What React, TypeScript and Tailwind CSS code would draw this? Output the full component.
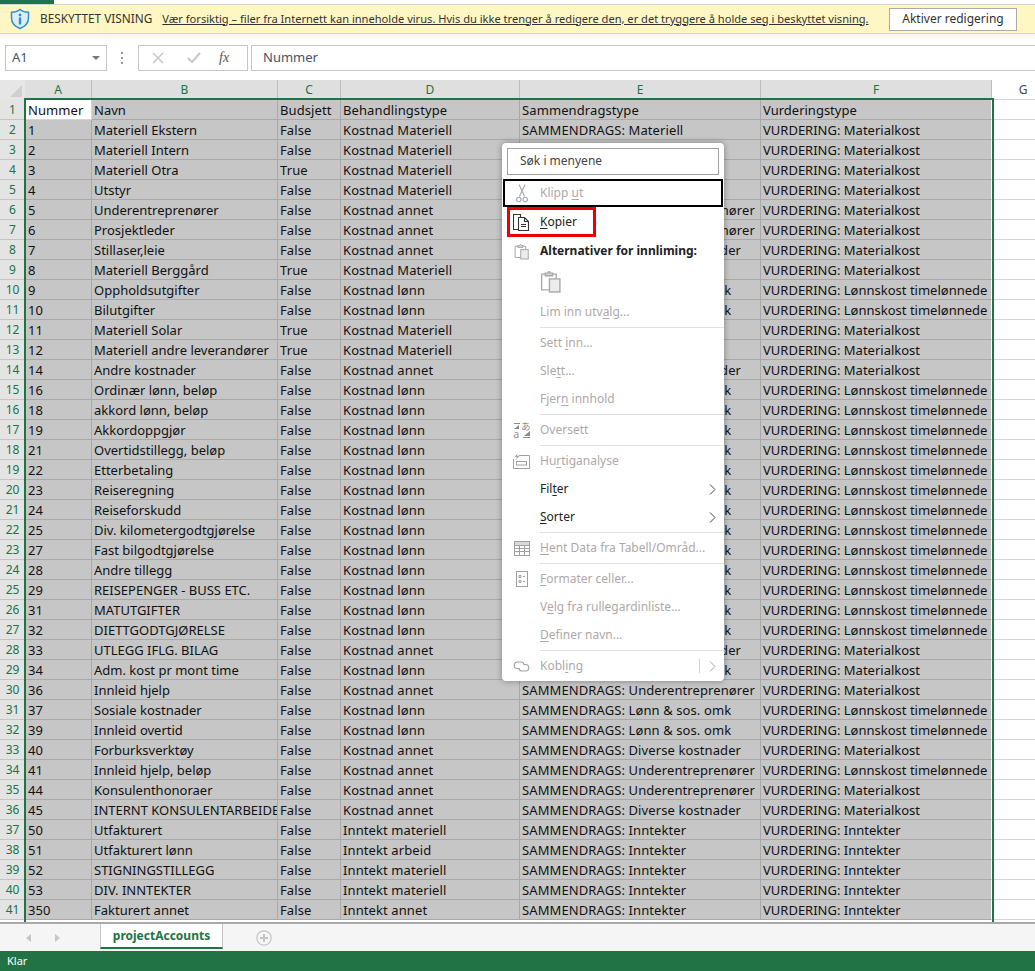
const MAT = "Kostnad Materiell";
const LON = "Kostnad lønn";
const ANN = "Kostnad annet";
const S_MAT = "SAMMENDRAGS: Materiell";
const S_UE = "SAMMENDRAGS: Underentreprenører";
const S_DIV = "SAMMENDRAGS: Diverse kostnader";
const S_LON = "SAMMENDRAGS: Lønn & sos. omk";
const S_INN = "SAMMENDRAGS: Inntekter";
const V_MAT = "VURDERING: Materialkost";
const V_LON = "VURDERING: Lønnskost timelønnede";
const V_INN = "VURDERING: Inntekter";

const rows: string[][] = [
  ["Nummer", "Navn", "Budsjett", "Behandlingstype", "Sammendragstype", "Vurderingstype"],
  ["1", "Materiell Ekstern", "False", MAT, S_MAT, V_MAT],
  ["2", "Materiell Intern", "False", MAT, S_MAT, V_MAT],
  ["3", "Materiell Otra", "True", MAT, S_MAT, V_MAT],
  ["4", "Utstyr", "False", MAT, S_MAT, V_MAT],
  ["5", "Underentreprenører", "False", ANN, S_UE, V_MAT],
  ["6", "Prosjektleder", "False", ANN, S_UE, V_MAT],
  ["7", "Stillaser,leie", "False", ANN, S_DIV, V_MAT],
  ["8", "Materiell Berggård", "True", MAT, S_MAT, V_MAT],
  ["9", "Oppholdsutgifter", "False", LON, S_LON, V_LON],
  ["10", "Bilutgifter", "False", LON, S_LON, V_LON],
  ["11", "Materiell Solar", "True", MAT, S_MAT, V_MAT],
  ["12", "Materiell andre leverandører", "True", MAT, S_MAT, V_MAT],
  ["14", "Andre kostnader", "False", ANN, S_DIV, V_MAT],
  ["16", "Ordinær lønn, beløp", "False", LON, S_LON, V_LON],
  ["18", "akkord lønn, beløp", "False", LON, S_LON, V_LON],
  ["19", "Akkordoppgjør", "False", LON, S_LON, V_LON],
  ["21", "Overtidstillegg, beløp", "False", LON, S_LON, V_LON],
  ["22", "Etterbetaling", "False", LON, S_LON, V_LON],
  ["23", "Reiseregning", "False", LON, S_LON, V_LON],
  ["24", "Reiseforskudd", "False", LON, S_LON, V_LON],
  ["25", "Div. kilometergodtgjørelse", "False", LON, S_LON, V_LON],
  ["27", "Fast bilgodtgjørelse", "False", LON, S_LON, V_LON],
  ["28", "Andre tillegg", "False", LON, S_LON, V_LON],
  ["29", "REISEPENGER - BUSS ETC.", "False", LON, S_LON, V_LON],
  ["31", "MATUTGIFTER", "False", LON, S_LON, V_LON],
  ["32", "DIETTGODTGJØRELSE", "False", LON, S_LON, V_LON],
  ["33", "UTLEGG IFLG. BILAG", "False", ANN, S_DIV, V_MAT],
  ["34", "Adm. kost pr mont time", "False", LON, S_LON, V_MAT],
  ["36", "Innleid hjelp", "False", ANN, S_UE, V_MAT],
  ["37", "Sosiale kostnader", "False", LON, S_LON, V_LON],
  ["39", "Innleid overtid", "False", LON, S_LON, V_LON],
  ["40", "Forburksverktøy", "False", ANN, S_DIV, V_MAT],
  ["41", "Innleid hjelp, beløp", "False", ANN, S_UE, V_LON],
  ["44", "Konsulenthonoraer", "False", ANN, S_UE, V_MAT],
  ["45", "INTERNT KONSULENTARBEIDE", "False", ANN, S_DIV, V_MAT],
  ["50", "Utfakturert", "False", "Inntekt materiell", S_INN, V_INN],
  ["51", "Utfakturert lønn", "False", "Inntekt arbeid", S_INN, V_INN],
  ["52", "STIGNINGSTILLEGG", "False", "Inntekt materiell", S_INN, V_INN],
  ["53", "DIV. INNTEKTER", "False", "Inntekt materiell", S_INN, V_INN],
  ["350", "Fakturert annet", "False", "Inntekt annet", S_INN, V_INN],
];

const colWidths = ["w-[67px]", "w-[186px]", "w-[63px]", "w-[179px]", "w-[241px]", "w-[231px]"];
const colNames = ["A", "B", "C", "D", "E", "F"];

function Scissors() {
  return (
    <svg width="12" height="19" viewBox="0 0 12 19" fill="none" stroke="#a6a6a6" strokeWidth="1.1">
      <path d="M3 0.5L8.6 12.5M9 0.5L3.4 12.5" />
      <circle cx="2.8" cy="15.5" r="2.2" />
      <circle cx="9.2" cy="15.5" r="2.2" />
    </svg>
  );
}

function CopyIcon() {
  return (
    <svg width="17" height="17" viewBox="0 0 17 17" fill="none" stroke="#333" strokeWidth="1.1">
      <path d="M5.5 15.5H0.5V0.5H7.5V3" />
      <path d="M5.5 3.5H11.5L15.5 7.5V16.5H5.5Z" fill="#fff" />
      <path d="M11.5 3.5V7.5H15.5M8 10.5H13M8 12.5H13" />
    </svg>
  );
}

function PasteIcon({ size }: { size: number }) {
  return (
    <svg width={size} height={size + 2} viewBox="0 0 20 22" fill="none" stroke="#a8a8a8" strokeWidth="1.3">
      <path d="M9 19H1.5V4H5M12 4H15.5V8" />
      <path d="M5 5.5V3H7.5C7.7 1 9.5 1 9.7 3H12V5.5Z" fill="#d8d8d8" />
      <rect x="9" y="8.5" width="10" height="12.5" fill="#ececec" />
    </svg>
  );
}

function TranslateIcon() {
  return (
    <svg width="18" height="18" viewBox="0 0 18 18" fill="none">
      <path d="M1 2h6v1H1zM1 8l5-4v4z" fill="#8c8c8c" />
      <path d="M17 17h-7v-1h7zM17 10l-6 5h6z" fill="#8c8c8c" />
      <text x="0.5" y="17" fontSize="10" fontFamily="'Noto Sans', sans-serif" fill="#8c8c8c">a</text>
      <text x="8" y="9" fontSize="9.5" fontFamily="'Noto Sans CJK JP', sans-serif" fill="#8c8c8c">あ</text>
    </svg>
  );
}

function QuickIcon() {
  return (
    <svg width="17" height="16" viewBox="0 0 17 16" fill="none" stroke="#a0a0a0" strokeWidth="1">
      <path d="M5.5 2.5H16.5V15.5H0.5V6" />
      <rect x="3.5" y="8.5" width="10" height="3.5" />
      <path d="M4.5 0.5L1.5 4H4L2.5 7L6.5 3H4Z" fill="#a0a0a0" stroke="none" />
    </svg>
  );
}

function TableIcon() {
  return (
    <svg width="16" height="15" viewBox="0 0 16 15" fill="none" stroke="#a0a0a0" strokeWidth="1">
      <rect x="0.5" y="0.5" width="15" height="14" />
      <rect x="0.5" y="0.5" width="15" height="4" fill="#d9d9d9" />
      <path d="M0.5 7.5H15.5M0.5 10.5H15.5M5.5 4.5V14.5M10.5 4.5V14.5" />
    </svg>
  );
}

function FormatIcon() {
  return (
    <svg width="12" height="16" viewBox="0 0 12 16" fill="none" stroke="#a0a0a0" strokeWidth="1">
      <rect x="0.5" y="0.5" width="11" height="15" />
      <path d="M3 4.5H5V6.5H3ZM3 9.5H5V11.5H3ZM7 5.5H9M7 10.5H9" />
    </svg>
  );
}

function LinkIcon() {
  return (
    <svg width="17" height="11" viewBox="0 0 17 11" fill="none" stroke="#a0a0a0" strokeWidth="1.1">
      <path d="M6 7.5H4.5a3 3 0 0 1 0-6.5h3.5a3 3 0 0 1 3 3" />
      <path d="M11 3.5h1.5a3 3 0 0 1 0 6.5H9a3 3 0 0 1-3-3" />
    </svg>
  );
}

function Chevron({ muted }: { muted?: boolean }) {
  return (
    <svg width="7" height="11" viewBox="0 0 7 11" fill="none" stroke={muted ? "#a6a6a6" : "#444"} strokeWidth="1">
      <path d="M1 0.5L6 5.5L1 10.5" />
    </svg>
  );
}

function Key({ before, k, after }: { before?: string; k: string; after?: string }) {
  return (
    <span>
      {before}
      <span className="underline underline-offset-2">{k}</span>
      {after}
    </span>
  );
}

function Item({
  icon,
  disabled = true,
  right,
  tall,
  children,
}: {
  icon?: React.ReactNode;
  disabled?: boolean;
  right?: React.ReactNode;
  tall?: boolean;
  children: React.ReactNode;
}) {
  return (
    <div className={`flex items-center ${tall ? "h-[30px]" : "h-7"} ${disabled ? "text-[#b0a8a8]" : "text-[#222]"}`}>
      <div className="flex w-[38px] shrink-0 items-center justify-center pl-[1px]">{icon}</div>
      <div className="flex-1 whitespace-nowrap">{children}</div>
      {right}
    </div>
  );
}

function Sep() {
  return (
    <div className="flex h-[3px] items-center pl-[38px]">
      <div className="h-px w-full bg-[#e1e1e1]" />
    </div>
  );
}

function ContextMenu() {
  return (
    <div className="absolute left-[502px] top-[143px] z-20 w-[222px] rounded-[4px] bg-white text-[12px] shadow-[0_0_6px_rgba(0,0,0,0.35)]">
      <div className="px-[5px] pb-1 pt-[5px]">
        <div className="flex h-[27px] items-center border border-[#a0a0a0] pb-[1px] pl-[12px] text-[#444]">Søk i menyene</div>
      </div>
      <div className="mx-px border-2 border-black">
        <div className="-my-[2px] -ml-[3px] -mr-[2px]">
          <Item icon={<Scissors />}>
            <Key before="Klipp " k="u" after="t" />
          </Item>
        </div>
      </div>
      <div className="relative">
        <Item icon={<CopyIcon />} disabled={false} tall>
          <Key k="K" after="opier" />
        </Item>
        <div className="absolute left-[5px] top-0 h-[30px] w-[89px] border-[3px] border-[#ee0000]" />
      </div>
      <Item icon={<PasteIcon size={15} />} disabled={false}>
        <span className="font-bold">Alternativer for innliming:</span>
      </Item>
      <div className="flex h-[33px] items-center pl-[38px]">
        <PasteIcon size={21} />
      </div>
      <Item>
        <Key before="Lim inn utv" k="a" after="lg..." />
      </Item>
      <Sep />
      <Item>
        <Key before="Sett " k="i" after="nn..." />
      </Item>
      <Item>
        <Key before="Sle" k="t" after="t..." />
      </Item>
      <Item>
        <Key before="Fjer" k="n" after=" innhold" />
      </Item>
      <Sep />
      <Item icon={<TranslateIcon />}>Oversett</Item>
      <Sep />
      <Item icon={<QuickIcon />}>
        <Key before="Hu" k="r" after="tiganalyse" />
      </Item>
      <Item disabled={false} right={<div className="pr-[8px]"><Chevron /></div>}>
        <Key before="Fil" k="t" after="er" />
      </Item>
      <Item disabled={false} right={<div className="pr-[8px]"><Chevron /></div>}>
        <Key k="S" after="orter" />
      </Item>
      <Sep />
      <Item icon={<TableIcon />}>
        <Key k="H" after="ent Data fra Tabell/Områd..." />
      </Item>
      <Sep />
      <Item icon={<FormatIcon />}>
        <Key k="F" after="ormater celler..." />
      </Item>
      <Item>
        <Key before="V" k="e" after="lg fra rullegardinliste..." />
      </Item>
      <Item>
        <Key k="D" after="efiner navn..." />
      </Item>
      <Sep />
      <Item
        icon={<LinkIcon />}
        right={
          <div className="flex items-center gap-[9px] pr-[8px]">
            <div className="h-[14px] w-px bg-[#d0d0d0]" />
            <Chevron muted />
          </div>
        }
      >
        <Key before="Kobl" k="i" after="ng" />
      </Item>
      <div className="h-px" />
    </div>
  );
}

function Sheet() {
  return (
    <div className="relative flex-1 overflow-hidden text-[13px] text-[#111]">
      <div className="flex h-5">
        <div className="flex w-[25px] shrink-0 items-end justify-end bg-[#e6e6e6] pb-[3px] pr-[3px]">
          <div className="h-0 w-0 border-b-[12px] border-l-[12px] border-b-[#d0d0d0] border-l-transparent" />
        </div>
        {colNames.map((name, i) => (
          <div
            key={name}
            className={`${colWidths[i]} flex shrink-0 items-start justify-center border-r border-[#bdbdbd] bg-[#dfdfdf] text-[12px] leading-[20px] text-[#217346]`}
          >
            {name}
          </div>
        ))}
        <div className="w-[62px] shrink-0 border-b border-[#d4d4d4] text-center text-[12px] leading-[20px] text-[#444]">G</div>
      </div>
      {rows.map((row, r) => (
        <div key={r} className="flex h-5">
          <div className="flex w-[25px] shrink-0 items-center justify-center border-b border-[#c4c4c4] bg-[#e4e4e4] pt-px text-[12px] text-[#217346]">
            {r + 1}
          </div>
          {row.map((cell, c) => (
            <div
              key={c}
              className={`${colWidths[c]} shrink-0 overflow-hidden whitespace-nowrap border-b border-r leading-[21px] ${
                c === 0 ? "pl-[3px]" : "pl-[2px]"
              } ${r === 0 && c === 0 ? "border-[#d4d4d4] bg-white" : "border-[#a9a9a9] bg-[#c6c6c6]"} ${
                c === 5 ? "border-r-white" : c === 1 ? "" : "tracking-[0.1px]"
              }`}
            >
              {cell}
            </div>
          ))}
          <div className="w-[62px] shrink-0 border-b border-[#d4d4d4]" />
        </div>
      ))}
      <div className="absolute bottom-0 left-[24px] top-[18px] z-10 w-[970px] border-x-2 border-t-2 border-[#217346]" />
    </div>
  );
}

export default function App() {
  return (
    <div className="relative flex h-[971px] w-full flex-col overflow-hidden bg-white font-['Noto_Sans',sans-serif]">
      <div className="h-1 w-[54px] bg-[#217346]" />
      <div className="flex h-[30px] items-center whitespace-nowrap border-y border-y-[#d4d4d4] border-b-[#e3dc9f] bg-[#fff7c3] text-[11.1px] text-[#333]">
        <svg className="ml-[10px]" width="20" height="22" viewBox="0 0 20 22" fill="none">
          <path d="M10 1.5C7.5 3.5 5 4.2 1.5 4.2V10c0 5 3.5 8.5 8.5 10.5 5-2 8.5-5.5 8.5-10.5V4.2C15 4.2 12.5 3.5 10 1.5Z" fill="#dceefa" stroke="#2f8fd0" strokeWidth="1.5" />
          <circle cx="10" cy="7" r="1.4" fill="#2f8fd0" />
          <rect x="8.8" y="9.5" width="2.4" height="7" fill="#2f8fd0" />
        </svg>
        <span className="ml-[10px] text-[11.8px]">BESKYTTET VISNING</span>
        <span className="ml-[10px] underline">
          Vær forsiktig – filer fra Internett kan inneholde virus. Hvis du ikke trenger å redigere den, er det tryggere å holde seg i beskyttet visning.
        </span>
        <button className="ml-auto mr-[18px] h-[23px] w-[128px] border border-[#ababab] bg-white text-[12px] text-[#333]">
          Aktiver redigering
        </button>
      </div>
      <div className="flex h-[46px] items-center bg-[linear-gradient(#f4f4f4,#ffffff_7px)] pt-[1px] text-[13px] text-[#44546a]">
        <div className="ml-[5px] flex h-[26px] w-[102px] items-center justify-between border border-[#c6c6c6] bg-white pl-[6px] pr-[6px]">
          A1
          <div className="h-0 w-0 border-x-[4px] border-t-[4px] border-x-transparent border-t-[#777]" />
        </div>
        <div className="ml-[14px] flex w-[4px] flex-col gap-[3px]">
          <div className="h-[2px] w-[2px] bg-[#999]" />
          <div className="h-[2px] w-[2px] bg-[#999]" />
          <div className="h-[2px] w-[2px] bg-[#999]" />
        </div>
        <div className="ml-[13px] flex h-[26px] w-[110px] items-center border border-[#c6c6c6] bg-white">
          <svg className="ml-[13px]" width="12" height="12" viewBox="0 0 12 12" stroke="#c8c8c8" strokeWidth="1.6"><path d="M1 1l10 10M11 1L1 11" /></svg>
          <svg className="ml-[23px]" width="14" height="12" viewBox="0 0 14 12" fill="none" stroke="#c8c8c8" strokeWidth="2"><path d="M1 6l4 4 8-9" /></svg>
          <span className="ml-[18px] font-['Liberation_Serif',serif] text-[14px] italic text-[#555]">fx</span>
        </div>
        <div className="ml-[3px] flex h-[26px] flex-1 items-center border-y border-l border-[#c6c6c6] bg-white pl-[11px]">Nummer</div>
      </div>
      <Sheet />
      <div className="flex h-[29px] border-t-2 border-[#a9a9a9] bg-[#f5f5f5]">
        <div className="flex w-[100px] items-center pl-[26px]">
          <div className="h-0 w-0 border-y-[4px] border-r-[5px] border-y-transparent border-r-[#c6c6c6]" />
          <div className="ml-[24px] h-0 w-0 border-y-[4px] border-l-[5px] border-y-transparent border-l-[#c6c6c6]" />
        </div>
        <div className="flex h-[25px] w-[123px] items-center justify-center border-x border-b-2 border-x-[#c6c6c6] border-b-[#217346] bg-white text-[12px] font-bold text-[#217346]">
          projectAccounts
        </div>
        <div className="ml-[33px] flex items-center">
          <svg width="16" height="16" viewBox="0 0 16 16" fill="none" stroke="#c4c4c4">
            <circle cx="8" cy="8" r="7.2" strokeWidth="1.2" />
            <path d="M8 4v8M4 8h8" strokeWidth="2" />
          </svg>
        </div>
      </div>
      <div className="flex h-5 items-center bg-[#217346] pl-[7px] text-[11px] text-white">Klar</div>
      <ContextMenu />
    </div>
  );
}
